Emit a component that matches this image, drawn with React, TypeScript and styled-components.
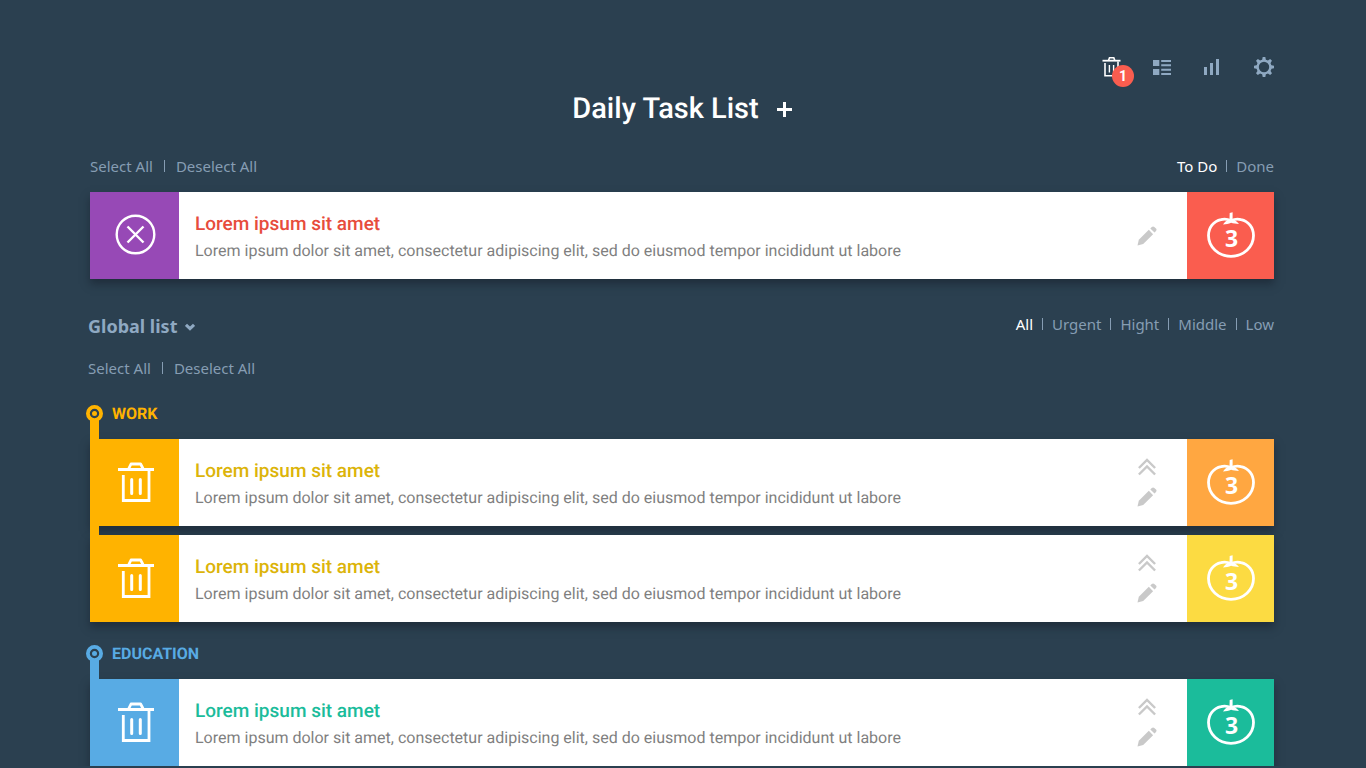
import React from "react";
import styled, { createGlobalStyle } from "styled-components";

const background = "#2b4050";
const muted = "#869db3";
const accent = "#8fa9c2";

const GlobalStyle = createGlobalStyle`
  *, *::before, *::after { box-sizing: border-box; }
  body {
    margin: 0;
    background: ${background};
    color: #fff;
    font-family: Roboto, "Liberation Sans", sans-serif;
    text-rendering: geometricPrecision;
  }
  button {
    margin: 0;
    padding: 0;
    border: 0;
    background: none;
    color: inherit;
    font: inherit;
    cursor: pointer;
  }
  svg { display: block; }
  h1, h2, h3, p, ul { margin: 0; padding: 0; font-weight: inherit; }
  ul { list-style: none; }
`;

const Page = styled.main`
  padding: 55px 92px 0 90px;
`;

const IconBar = styled.nav`
  display: flex;
  justify-content: flex-end;
  align-items: center;
  gap: 31px;
  height: 24px;
`;

const IconButton = styled.button<{ $active?: boolean }>`
  position: relative;
  display: grid;
  place-items: center;
  width: 20px;
  height: 24px;
  color: ${(p) => (p.$active ? "#fff" : accent)};
`;

const Badge = styled.span`
  position: absolute;
  left: 11px;
  top: 10px;
  width: 22px;
  height: 22px;
  border-radius: 50%;
  background: #fa5d4f;
  color: #fff;
  font-size: 14px;
  font-weight: 700;
  line-height: 22px;
  text-align: center;
`;

const TitleBar = styled.header`
  display: flex;
  justify-content: center;
  align-items: center;
  gap: 18px;
  margin-top: 14px;
`;

const Title = styled.h1`
  font-size: 29px;
  font-weight: 500;
  line-height: 32px;
`;

const Toolbar = styled.div`
  display: flex;
  justify-content: space-between;
  align-items: center;
  height: 20px;
`;

const TodaySection = styled.section`
  display: flex;
  flex-direction: column;
  gap: 16px;
  margin-top: 31px;
`;

const LinkGroup = styled.div<{ $gap: number }>`
  display: flex;
  align-items: center;
  gap: ${(p) => p.$gap}px;
`;

const Divider = styled.span`
  width: 1px;
  height: 12px;
  background: ${muted};
`;

const TextButton = styled.button<{ $active?: boolean }>`
  color: ${(p) => (p.$active ? "#fff" : muted)};
  font-family: "Noto Sans", sans-serif;
  font-size: 15px;
  line-height: 20px;
`;

const GlobalBar = styled.section`
  display: flex;
  flex-direction: column;
  gap: 20px;
  margin: 35px 0 0 -2px;
  padding-bottom: 4px;
`;

const GlobalHead = styled.div`
  display: flex;
  justify-content: space-between;
  align-items: flex-start;
  height: 24px;
`;

const GlobalTitle = styled.button`
  display: flex;
  align-items: center;
  gap: 8px;
  color: ${accent};
  font-family: "Noto Sans", sans-serif;
  font-size: 18px;
  font-weight: 700;
  line-height: 24px;
`;

const Group = styled.section<{ $color: string }>`
  position: relative;
  margin-top: 22px;
  color: ${(p) => p.$color};

  &::before {
    content: "";
    position: absolute;
    z-index: 1;
    top: 16px;
    bottom: 8px;
    left: 0;
    width: 9px;
    background: ${(p) => p.$color};
  }
`;

const GroupHead = styled.div`
  display: flex;
  align-items: center;
  gap: 9px;
  height: 18px;
  margin: 0 0 17px -4px;
`;

const GroupName = styled.h2`
  padding-top: 2px;
  font-size: 16px;
  font-weight: 700;
  line-height: 18px;
`;

const TaskList = styled.ul`
  display: flex;
  flex-direction: column;
  gap: 9px;
`;

const Card = styled.article`
  display: flex;
  height: 87px;
  background: #fff;
  box-shadow: 0 5px 8px rgba(20, 28, 40, 0.5);
`;

const Tile = styled.button<{ $color: string }>`
  display: grid;
  flex: none;
  place-items: center;
  width: 89px;
  padding-left: 2px;
  background: ${(p) => p.$color};
  color: #fff;
`;

const CardBody = styled.div`
  flex: 1;
  min-width: 0;
  padding: 20px 16px;
`;

const CardTitle = styled.h3<{ $color: string }>`
  color: ${(p) => p.$color};
  font-size: 19px;
  font-weight: 500;
  line-height: 24px;
`;

const CardText = styled.p`
  margin-top: 5px;
  color: #7f7f7f;
  font-size: 16px;
  line-height: 20px;
`;

const CardActions = styled.div`
  display: flex;
  flex: none;
  flex-direction: column;
  align-items: center;
  justify-content: center;
  gap: 11px;
  width: 80px;
  color: #c9c9c9;
`;

const Counter = styled.button<{ $color: string }>`
  display: grid;
  flex: none;
  place-items: center;
  width: 87px;
  padding-bottom: 1px;
  background: ${(p) => p.$color};
  color: #fff;

  > * { grid-area: 1 / 1; }
`;

const Count = styled.span`
  padding: 6px 0 0 2px;
  font-family: "Noto Sans", sans-serif;
  font-size: 23px;
  font-weight: 700;
  line-height: 24px;
`;

const SmallBin = () => (
  <svg width="20" height="22" viewBox="0 0 20 22" fill="none" stroke="currentColor">
    <path d="M1.500 4.700H19.500" strokeWidth="1.8" />
    <path d="M7.500 4.500L8.500 1.700H12.800L13.800 4.500" strokeWidth="1.6" />
    <path d="M4 7V19.800H17V5.500" strokeWidth="1.6" />
    <path d="M8.400 9v7.500M12.600 9v7.500" strokeWidth="1.4" />
  </svg>
);

const ListIcon = () => (
  <svg width="18" height="15" viewBox="0 0 18 15" fill="currentColor">
    <path d="M0 0h6.300v6H0zM0 9h6.300v6H0zM8.200 0H18v2H8.200zM8.200 4.200H18v2H8.200zM8.200 8.800H18v2H8.200zM8.200 13H18v2H8.200z" />
  </svg>
);

const BarsIcon = () => (
  <svg width="18" height="16" viewBox="0 0 18 16" fill="currentColor">
    <path d="M0 8h3v8h-3zM6 4h3v12h-3zM12 0h3v16h-3z" />
  </svg>
);

const GearIcon = () => (
  <svg width="20" height="20" viewBox="0 0 20 20" stroke="currentColor" fill="none">
    <circle cx="10" cy="10" r="6.400" strokeWidth="2.400" />
    {[0, 45, 90, 135, 180, 225, 270, 315].map((angle) => (
      <path key={angle} d="M8 3.600L8.700 0h2.600L12 3.600z" fill="currentColor" stroke="none" transform={`rotate(${angle} 10 10)`} />
    ))}
  </svg>
);

const PlusIcon = () => (
  <svg width="15" height="15" viewBox="0 0 15 15" stroke="currentColor" strokeWidth="3">
    <path d="M0 7.500h15M7.500 0v15" />
  </svg>
);

const ChevronIcon = () => (
  <svg width="10" height="12" viewBox="0 0 10 12" fill="none" stroke="currentColor" strokeWidth="3">
    <path d="M1 4.800L5 8.600L9 4.800" />
  </svg>
);

const MarkerIcon = () => (
  <svg width="17" height="17" viewBox="0 0 17 17">
    <circle cx="8.500" cy="8.500" r="6.600" fill={background} stroke="currentColor" strokeWidth="3.800" />
    <circle cx="8.500" cy="8.500" r="2.500" fill="currentColor" />
  </svg>
);

const BinIcon = () => (
  <svg width="36" height="41" viewBox="0 0 36 41" fill="none" stroke="currentColor" strokeWidth="2.800">
    <path d="M0 7.500H36" />
    <path d="M10.800 6.500L13 2H22.600L25 6.500" strokeLinejoin="round" />
    <path d="M5.300 13V38.500H31V8" />
    <path d="M13.700 17.500v14M22.300 17.500v14" strokeWidth="3" strokeLinecap="round" />
  </svg>
);

const CrossIcon = () => (
  <svg width="42" height="44" viewBox="0 0 42 44" fill="none" stroke="currentColor" strokeWidth="2.400">
    <circle cx="20.500" cy="20.500" r="18.800" />
    <path d="M12.500 12.500l16 16M28.500 12.500l-16 16" />
  </svg>
);

const TomatoIcon = () => (
  <svg width="48" height="46" viewBox="0 0 48 46" fill="none" stroke="currentColor">
    <path
      d="M24 8.600C20.500 7 17 6.700 14 7.600C6.500 9.200 1.500 15.500 1.500 23.500C1.500 35 11.500 44.300 24 44.300C36.500 44.300 46.500 35 46.500 23.500C46.500 15.500 41.500 9.200 34 7.600C31 6.700 27.500 7 24 8.600Z"
      strokeWidth="2.800"
    />
    <path
      d="M22.700 1L25.600 0.300V7.200C28.200 8.200 30.400 9.800 32 11.900C29 11.800 26.200 11.600 24.100 10.800C21.800 11.800 19 12.400 16 12.400C17.600 9.800 19.800 8.200 22.500 7.200Z"
      fill="currentColor"
      stroke="none"
    />
  </svg>
);

const RaiseIcon = () => (
  <svg width="18" height="18" viewBox="0 0 18 18" fill="none" stroke="currentColor" strokeWidth="2.400">
    <path d="M0.900 10L9 2L17.100 10M0.900 16.500L9 8.500L17.100 16.500" />
  </svg>
);

const PencilIcon = () => (
  <svg width="20" height="20" viewBox="0 0 20 20" fill="currentColor">
    <path d="M0.500 19.500L1.800 13.800L11.800 3.800L16.100 8.200L6.200 18.100Z" />
    <path d="M13.300 2.400L14.800 0.900C15.600 0.200 16.600 0.200 17.300 0.900L19 2.600C19.700 3.300 19.700 4.300 19 5L17.500 6.600Z" />
  </svg>
);

const TEXT = "Lorem ipsum dolor sit amet, consectetur adipiscing elit, sed do eiusmod tempor incididunt ut labore";

interface TaskProps {
  tile: string;
  title: string;
  counter: string;
  current?: boolean;
}

const Task = ({ tile, title, counter, current }: TaskProps) => (
  <Card>
    <Tile type="button" $color={tile} aria-label={current ? "Remove from today" : "Delete task"}>
      {current ? <CrossIcon /> : <BinIcon />}
    </Tile>
    <CardBody>
      <CardTitle $color={title}>Lorem ipsum sit amet</CardTitle>
      <CardText>{TEXT}</CardText>
    </CardBody>
    <CardActions>
      {!current && (
        <button type="button" aria-label="Raise priority">
          <RaiseIcon />
        </button>
      )}
      <button type="button" aria-label="Edit task">
        <PencilIcon />
      </button>
    </CardActions>
    <Counter type="button" $color={counter}>
      <TomatoIcon />
      <Count>3</Count>
    </Counter>
  </Card>
);

interface OptionsProps {
  items: string[];
  active?: string;
  gap: number;
}

const Options = ({ items, active, gap }: OptionsProps) => (
  <LinkGroup $gap={gap}>
    {items.map((item, i) => (
      <React.Fragment key={item}>
        {i > 0 && <Divider />}
        <TextButton type="button" $active={item === active}>
          {item}
        </TextButton>
      </React.Fragment>
    ))}
  </LinkGroup>
);

const groups = [
  {
    name: "WORK",
    color: "#ffb300",
    tasks: [
      { title: "#dcb40a", counter: "#ffa741" },
      { title: "#dcb40a", counter: "#fcdb42" },
    ],
  },
  {
    name: "EDUCATION",
    color: "#58abe4",
    tasks: [{ title: "#1bbc9b", counter: "#1bbc9b" }],
  },
];

export default function App() {
  return (
    <>
      <GlobalStyle />
      <Page>
        <IconBar aria-label="Views">
          <IconButton type="button" $active aria-label="Bin">
            <SmallBin />
            <Badge>1</Badge>
          </IconButton>
          <IconButton type="button" aria-label="List">
            <ListIcon />
          </IconButton>
          <IconButton type="button" aria-label="Statistics">
            <BarsIcon />
          </IconButton>
          <IconButton type="button" aria-label="Settings">
            <GearIcon />
          </IconButton>
        </IconBar>
        <TitleBar>
          <Title>Daily Task List</Title>
          <button type="button" aria-label="Add task">
            <PlusIcon />
          </button>
        </TitleBar>
        <TodaySection>
          <Toolbar>
            <Options gap={11} items={["Select All", "Deselect All"]} />
            <Options gap={9} items={["To Do", "Done"]} active="To Do" />
          </Toolbar>
          <Task current tile="#9749b6" title="#e74c3c" counter="#fa5d4f" />
        </TodaySection>
        <GlobalBar>
          <GlobalHead>
            <GlobalTitle type="button">
              Global list <ChevronIcon />
            </GlobalTitle>
            <Options gap={9} items={["All", "Urgent", "Hight", "Middle", "Low"]} active="All" />
          </GlobalHead>
          <Toolbar>
            <Options gap={11} items={["Select All", "Deselect All"]} />
          </Toolbar>
        </GlobalBar>
        {groups.map((group) => (
          <Group key={group.name} $color={group.color}>
            <GroupHead>
              <MarkerIcon />
              <GroupName>{group.name}</GroupName>
            </GroupHead>
            <TaskList>
              {group.tasks.map((task, i) => (
                <li key={i}>
                  <Task tile={group.color} title={task.title} counter={task.counter} />
                </li>
              ))}
            </TaskList>
          </Group>
        ))}
      </Page>
    </>
  );
}
